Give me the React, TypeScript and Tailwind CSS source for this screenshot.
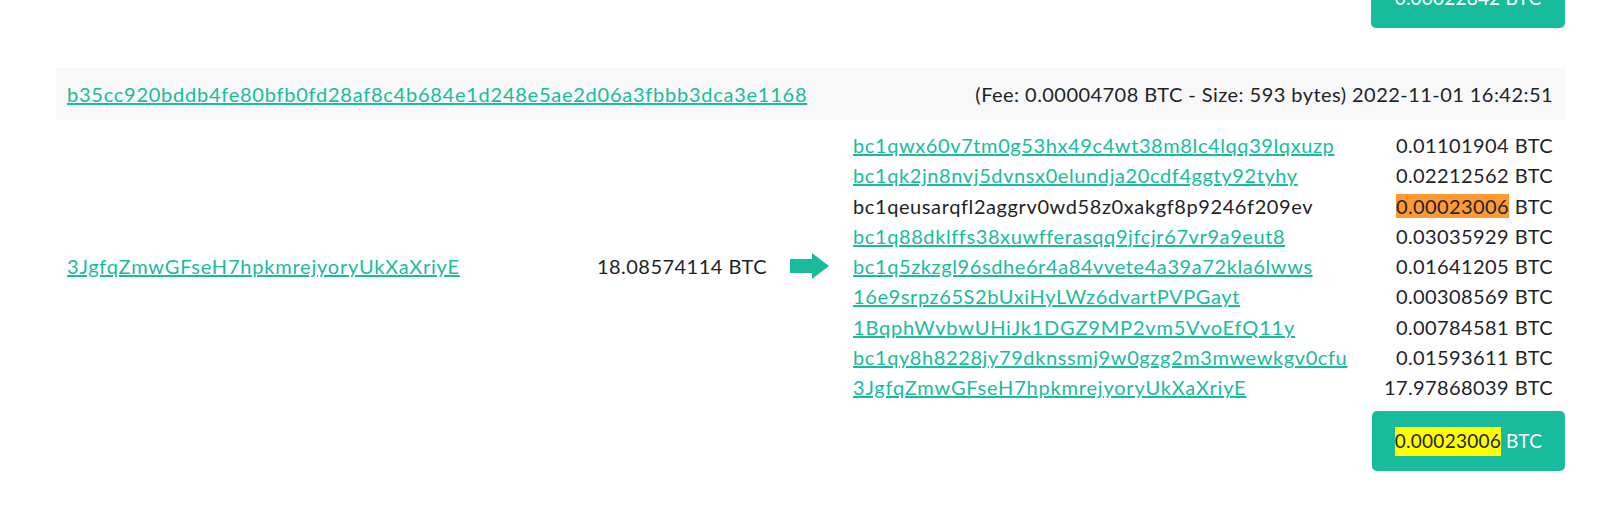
const outputs: { addr: string; amount: string; link: boolean; mine?: boolean; wide?: boolean }[] = [
  { addr: 'bc1qwx60v7tm0g53hx49c4wt38m8lc4lqq39lqxuzp', amount: '0.01101904', link: true },
  { addr: 'bc1qk2jn8nvj5dvnsx0elundja20cdf4ggty92tyhy', amount: '0.02212562', link: true },
  { addr: 'bc1qeusarqfl2aggrv0wd58z0xakgf8p9246f209ev', amount: '0.00023006', link: false, mine: true },
  { addr: 'bc1q88dklffs38xuwfferasqq9jfcjr67vr9a9eut8', amount: '0.03035929', link: true },
  { addr: 'bc1q5zkzgl96sdhe6r4a84vvete4a39a72kla6lwws', amount: '0.01641205', link: true },
  { addr: '16e9srpz65S2bUxiHyLWz6dvartPVPGayt', amount: '0.00308569', link: true },
  { addr: '1BqphWvbwUHiJk1DGZ9MP2vm5VvoEfQ11y', amount: '0.00784581', link: true, wide: true },
  { addr: 'bc1qy8h8228jy79dknssmj9w0gzg2m3mwewkgv0cfu', amount: '0.01593611', link: true },
  { addr: '3JgfqZmwGFseH7hpkmrejyoryUkXaXriyE', amount: '17.97868039', link: true, wide: true },
]

function Arrow() {
  return (
    <svg width="39" height="26" viewBox="0 0 39 26" className="block">
      <path d="M0 6h22V0l17 13-17 13v-6H0z" fill="#18bc9c" />
    </svg>
  )
}

export default function App() {
  return (
    <div className="w-[1600px] h-[512px] overflow-hidden bg-white font-['Lato',sans-serif] text-[20px] text-[#1e2328] pl-[56px] pr-[35px]">
      {/* previous tx total */}
      <div className="flex justify-end">
        <div className="mt-[-32px] h-[60px] w-[194px] rounded-[5px] bg-[#18bc9c] text-white text-[19px] tracking-[0.2px] flex items-center justify-center">
          0.00022842 BTC
        </div>
      </div>

      {/* tx header */}
      <div className="mt-[40px] h-[52px] bg-[#f8f8f8] flex items-center justify-between pl-[11px] pr-[12px]">
        <a href="#" className="text-[#18bc9c] underline tracking-[0.75px]">
          b35cc920bddb4fe80bfb0fd28af8c4b684e1d248e5ae2d06a3fbbb3dca3e1168
        </a>
        <span className="tracking-[0.45px]">(Fee: 0.00004708 BTC - Size: 593 bytes) 2022-11-01 16:42:51</span>
      </div>

      {/* inputs -> outputs */}
      <div className="flex items-center pt-[10px] pl-[11px] pr-[12px]">
        <div className="w-[480px]">
          <a href="#" className="text-[#18bc9c] underline tracking-[0.78px]">3JgfqZmwGFseH7hpkmrejyoryUkXaXriyE</a>
        </div>
        <div className="w-[220px] text-right tracking-[0.47px]">18.08574114 BTC</div>
        <div className="ml-[23px] w-[39px]">
          <Arrow />
        </div>
        <div className="ml-[24px] flex-1">
          {outputs.map((o, i) => (
            <div key={i} className="flex justify-between leading-[30.25px]">
              {o.link ? (
                <a href="#" className={o.wide ? 'text-[#18bc9c] underline tracking-[0.8px]' : 'text-[#18bc9c] underline tracking-[0.6px]'}>{o.addr}</a>
              ) : (
                <span className="tracking-[0.6px]">{o.addr}</span>
              )}
              <span className="tracking-[0.4px]">
                <span className={o.mine ? 'bg-[#ff9933]' : ''}>{o.amount}</span> BTC
              </span>
            </div>
          ))}
        </div>
      </div>

      <div className="flex justify-end mt-[9px]">
        <div className="h-[60px] w-[193px] rounded-[5px] bg-[#18bc9c] text-white text-[19px] tracking-[0.25px] flex items-center justify-center">
          <span className="bg-[#ffff00] text-[#1e2328]">0.00023006</span>&nbsp;BTC
        </div>
      </div>
    </div>
  )
}
